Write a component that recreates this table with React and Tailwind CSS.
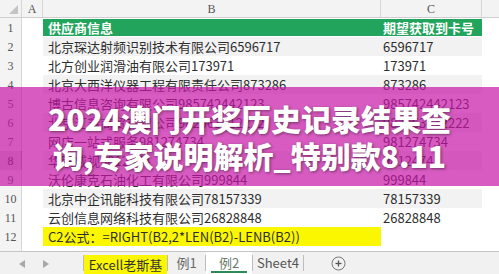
import React from "react";

const rows = [
  { n: 1, b: "供应商信息", c: "期望获取到卡号", head: true },
  { n: 2, b: "北京琛达射频识别技术有限公司6596717", c: "6596717" },
  { n: 3, b: "北方创业润滑油有限公司173971", c: "173971" },
  { n: 4, b: "北京大西洋仪器工程有限责任公司873286", c: "873286" },
  { n: 5, b: "博古信息咨询有限公司985742442123", c: "985742442123" },
  { n: 6, b: "北京汇鑫商贸有限公司982563412222", c: "982563412222" },
  { n: 7, b: "网店一站式服务981274734", c: "981274734" },
  { n: 8, b: "华联威视9812474", c: "9812474", active: true },
  { n: 9, b: "沃伦康克石油化工有限公司999844", c: "999844" },
  { n: 10, b: "北京中企讯能科技有限公司78157339", c: "78157339" },
  { n: 11, b: "云创信息网络科技有限公司26828848", c: "26828848" },
  { n: 12, b: "C2公式：=RIGHT(B2,2*LEN(B2)-LENB(B2))", c: "", formula: true },
];

const cjk = { fontFamily: '"Noto Sans CJK SC", "Noto Sans", sans-serif' };
const serif = { fontFamily: '"Liberation Serif", "DejaVu Serif", serif' };

function Row({ r }) {
  const band = r.n % 2 === 0;
  let bBg = band ? "bg-[#f2f2f2]" : "bg-white";
  let cBg = bBg;
  let txt = "text-[#2e2e2e]";
  if (r.head) {
    bBg = "bg-[#22a45c]";
    cBg = "bg-[#22a45c]";
    txt = "text-white font-bold";
  }
  if (r.formula) {
    bBg = "bg-[#fbf700]";
    cBg = "bg-white";
  }
  return (
    <div className="flex h-[19px]">
      <div
        className={`w-[22px] shrink-0 flex items-center justify-center text-[12px] border-r ${
          r.active
            ? "bg-[#dcdcdc] text-[#333] border-[#9e9e9e]"
            : "bg-[#f4f4f4] text-[#555] border-[#d6d6d6]"
        }`}
        style={serif}
      >
        {r.n}
      </div>
      <div className="w-[21px] shrink-0 bg-white" />
      <div
        className={`w-[338px] shrink-0 flex items-center pl-[5px] text-[13px] whitespace-nowrap overflow-hidden ${bBg} ${txt} ${
          r.head ? "my-[1px]" : ""
        }`}
        style={cjk}
      >
        {r.b}
      </div>
      <div
        className={`w-[101px] shrink-0 flex items-center pl-[2px] text-[13px] whitespace-nowrap overflow-visible ${cBg} ${txt} ${
          r.head ? "my-[1px]" : ""
        }`}
        style={cjk}
      >
        {r.c}
      </div>
      <div className="flex-1 bg-white" />
    </div>
  );
}

function Sep() {
  return <div className="w-px h-[16px] bg-[#bdbdbd] self-center shrink-0" />;
}

export default function App() {
  return (
    <div className="relative w-[499px] h-[274px] overflow-hidden bg-white" style={cjk}>
      {/* column header */}
      <div className="flex h-[18px] bg-[#f3f3f3] border-b border-[#cfcfcf]">
        <div className="w-[22px] shrink-0 border-r border-[#d6d6d6] relative">
          <svg className="absolute right-[3px] bottom-[3px]" width="9" height="9" viewBox="0 0 9 9">
            <polygon points="9,0 9,9 0,9" fill="#c4c4c4" />
          </svg>
        </div>
        <div
          className="w-[21px] shrink-0 border-r border-[#d6d6d6] flex items-center justify-center text-[12px] text-[#555]"
          style={serif}
        >
          A
        </div>
        <div
          className="w-[338px] shrink-0 border-r border-[#d6d6d6] flex items-center justify-center text-[12px] text-[#555]"
          style={serif}
        >
          B
        </div>
        <div
          className="w-[101px] shrink-0 border-r border-[#d6d6d6] flex items-center justify-center text-[12px] text-[#555]"
          style={serif}
        >
          C
        </div>
        <div className="flex-1" />
      </div>

      {rows.map((r) => (
        <Row key={r.n} r={r} />
      ))}

      {/* partial row 13 */}
      <div className="flex h-[5px] overflow-hidden">
        <div
          className="w-[22px] shrink-0 bg-[#f4f4f4] border-r border-[#d6d6d6] text-[12px] text-[#555] leading-[19px] text-center"
          style={serif}
        >
          13
        </div>
        <div className="flex-1 bg-white" />
      </div>

      {/* sheet tabs */}
      <div className="flex h-[23px] bg-[#f1f1f1] border-t border-[#c6c6c6] text-[13px]">
        <div className="w-[83px] shrink-0 relative">
          <svg className="absolute left-[19px] top-[8px]" width="6" height="8" viewBox="0 0 6 8">
            <polygon points="6,0 6,8 0,4" fill="#a8a8a8" />
          </svg>
          <svg className="absolute left-[43px] top-[8px]" width="6" height="8" viewBox="0 0 6 8">
            <polygon points="0,0 0,8 6,4" fill="#a8a8a8" />
          </svg>
        </div>
        <Sep />
        <div className="w-[83px] shrink-0 mt-[3px] bg-[#fbf700] flex items-center justify-center text-[#333]">
          Excell老斯基
        </div>
        <Sep />
        <div className="w-[37px] shrink-0 flex items-center justify-center text-[#666]">例1</div>
        <Sep />
        <div className="w-[46px] shrink-0 bg-white relative flex items-center justify-center text-[#6a7a6a]">
          例2
          <div className="absolute bottom-[1px] left-[5px] right-[5px] h-[2px] bg-[#2e8b57]" />
        </div>
        <Sep />
        <div className="w-[50px] shrink-0 flex items-center justify-center text-[#555]">Sheet4</div>
        <Sep />
        <div className="ml-[27px] self-center">
          <svg width="15" height="15" viewBox="0 0 15 15">
            <circle cx="7.5" cy="7.5" r="6.5" fill="none" stroke="#777" strokeWidth="1" />
            <line x1="4.5" y1="7.5" x2="10.5" y2="7.5" stroke="#555" strokeWidth="1.3" />
            <line x1="7.5" y1="4.5" x2="7.5" y2="10.5" stroke="#555" strokeWidth="1.3" />
          </svg>
        </div>
      </div>

      {/* overlay banner */}
      <div className="absolute left-0 right-0 top-[87px] h-[99px] bg-[rgba(198,22,166,0.7)] flex flex-col items-center justify-center">
        <div
          className="text-white font-extrabold text-[30px] leading-[37px] whitespace-nowrap text-center [text-shadow:1px_1px_3px_rgba(0,0,0,0.45)]"
          style={cjk}
        >
          <div>2024澳门开奖历史记录结果查</div>
          <div>询,专家说明解析_特别款8.11</div>
        </div>
      </div>
    </div>
  );
}
